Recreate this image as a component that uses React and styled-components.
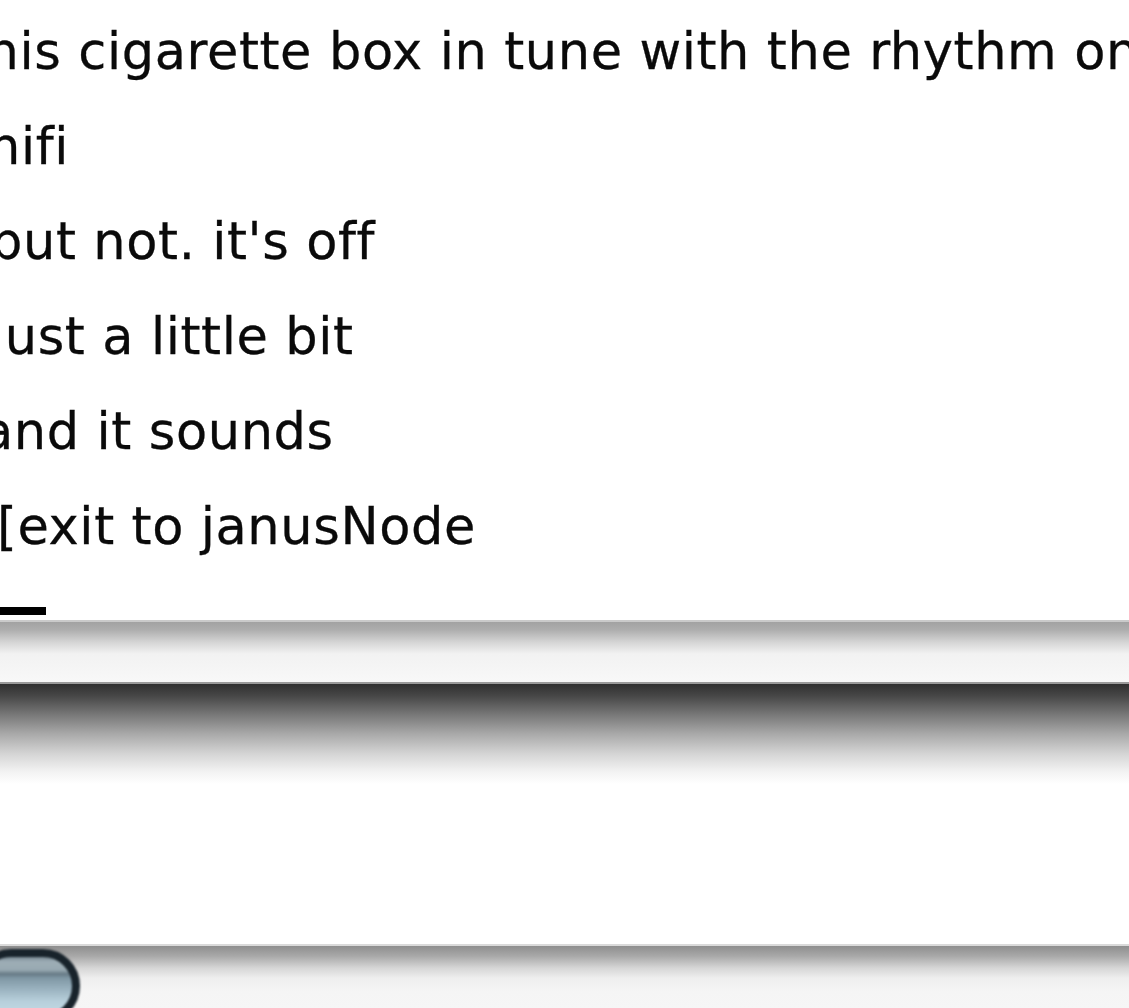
import React from 'react';
import styled, { createGlobalStyle } from 'styled-components';

const Global = createGlobalStyle`
  html, body {
    margin: 0;
    padding: 0;
    background: #ffffff;
  }
`;

const lines = [
  { text: 'this cigarette box in tune with the rhythm on', shift: -34 },
  { text: 'hifi', shift: -12 },
  { text: "but not. it's off", shift: -10 },
  { text: 'just a little bit', shift: -10 },
  { text: 'and it sounds', shift: -18 },
  { text: '[exit to janusNode', shift: -3 },
];

export default function App() {
  return (
    <>
      <Global />
      <Window>
        <TextView>
          {lines.map((l, i) => (
            <Line key={i} $shift={l.shift}>{l.text}</Line>
          ))}
          <Caret />
        </TextView>
        <ScrollTrack />
        <Divider />
        <ShadowPane />
        <BottomTrack>
          <Thumb />
        </BottomTrack>
      </Window>
    </>
  );
}

const Window = styled.div`
  width: 1129px;
  height: 1008px;
  overflow: hidden;
  background: #fff;
  display: flex;
  flex-direction: column;
`;

const TextView = styled.div`
  flex: 0 0 auto;
  padding-top: 4px;
  height: 615px;
  box-sizing: border-box;
  font-family: "DejaVu Sans", Verdana, sans-serif;
  font-size: 51px;
  letter-spacing: 0.6px;
  font-variant-ligatures: none;
  color: #0a0a0a;
  -webkit-text-stroke: 0.3px #0a0a0a;
  overflow: hidden;
`;

const Line = styled.div`
  height: 95px;
  line-height: 95px;
  white-space: nowrap;
  margin-left: ${(p) => p.$shift}px;
`;

const Caret = styled.div`
  width: 46px;
  height: 8px;
  margin-top: 33px;
  background: #000;
`;

const ScrollTrack = styled.div`
  flex: 0 0 auto;
  height: 60px;
  margin-top: 5px;
  border-top: 2px solid #cacaca;
  background: linear-gradient(
    to bottom,
    #a2a2a2 0px,
    #aeaeae 8px,
    #d4d4d4 20px,
    #f2f2f2 32px,
    #f8f8f8 100%
  );
`;

const Divider = styled.div`
  flex: 0 0 2px;
  background: #9a9a9a;
`;

const ShadowPane = styled.div`
  flex: 1 1 auto;
  min-height: 0;
  background: linear-gradient(
    to bottom,
    #303030 0px,
    #474747 12px,
    #767676 30px,
    #a9a9a9 50px,
    #d5d5d5 70px,
    #f3f3f3 88px,
    #ffffff 100px,
    #ffffff 100%
  );
`;

const BottomTrack = styled.div`
  flex: 0 0 62px;
  min-height: 0;
  border-top: 2px solid #dadada;
  display: flex;
  align-items: flex-start;
  background: linear-gradient(
    to bottom,
    #8e8e8e 0px,
    #a8a8a8 10px,
    #d6d6d6 22px,
    #eeeeee 32px,
    #f5f5f5 45px,
    #f6f6f6 100%
  );
`;

const Thumb = styled.div`
  flex: 0 0 auto;
  width: 106px;
  height: 74px;
  margin-left: -26px;
  margin-top: 3px;
  box-sizing: border-box;
  border: 8px solid #18232b;
  border-radius: 37px;
  filter: blur(1.2px);
  background: linear-gradient(
    to bottom,
    #7a8b95 0px,
    #9eaeb6 5px,
    #98a9b2 13px,
    #667984 17px,
    #7f97a4 21px,
    #9ab2bf 32px,
    #b7cfdb 44px,
    #c5dbe6 100%
  );
`;
